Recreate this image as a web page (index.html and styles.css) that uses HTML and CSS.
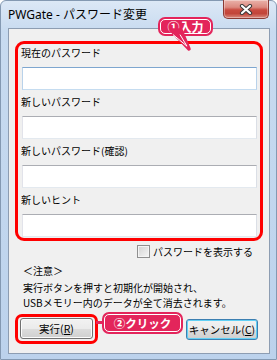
FILE: index.html
```html
<!DOCTYPE html>
<html lang="ja">
<head>
<meta charset="utf-8">
<title>PWGate - パスワード変更</title>
<link rel="stylesheet" href="styles.css">
</head>
<body>
<div class="window">
  <div class="titlebar">
    <span class="title">PWGate - パスワード変更</span>
    <div class="close">
      <svg width="14" height="11" viewBox="0 0 14 11">
        <path d="M3 2 L11 9 M11 2 L3 9" stroke="#3a3a3a" stroke-width="4.2" stroke-linecap="round"/>
        <path d="M3 2 L11 9 M11 2 L3 9" stroke="#ffffff" stroke-width="2.2" stroke-linecap="round"/>
      </svg>
    </div>
  </div>
  <div class="client">
    <div class="fields">
      <div class="field">
        <div class="label">現在のパスワード</div>
        <div class="input focus"></div>
      </div>
      <div class="field">
        <div class="label">新しいパスワード</div>
        <div class="input"></div>
      </div>
      <div class="field">
        <div class="label">新しいパスワード(確認)</div>
        <div class="input"></div>
      </div>
      <div class="field">
        <div class="label">新しいヒント</div>
        <div class="input"></div>
      </div>
    </div>
    <div class="show">
      <span class="cb"></span>
      <span>パスワードを表示する</span>
    </div>
    <div class="note">
      <p class="note-head">＜注意＞</p>
      <p class="note-body">実行ボタンを押すと初期化が開始され、<br>USBメモリー内のデータが全て消去されます。</p>
    </div>
    <div class="buttons">
      <div class="hl">
        <div class="btn">実行(<u>R</u>)</div>
      </div>
      <div class="btn default">キャンセル(<u>C</u>)</div>
    </div>
  </div>
</div>

<div class="callout c1">①入力</div>
<svg class="tail" width="28" height="26" viewBox="0 0 28 26">
  <polygon points="5,3 15,3 23,22" fill="#e3255b" stroke="#e3255b" stroke-width="3.5" stroke-linejoin="round"/>
  <polyline points="7,7.6 21,19.2 14,7.6" fill="none" stroke="#ffffff" stroke-width="1" stroke-linejoin="round"/>
</svg>
<div class="connector"></div>
<div class="callout c2">②クリック</div>
</body>
</html>
```
FILE: styles.css
```css
* { box-sizing: border-box; }
html, body { margin: 0; padding: 0; background: #ffffff; }
body {
  position: relative;
  width: 277px;
  height: 360px;
  font-family: "Noto Sans CJK JP", "Noto Sans", sans-serif;
  font-size: 10px;
  color: #000;
}
.window {
  width: 277px;
  height: 360px;
  border: 1px solid #8499b2;
  border-radius: 6px 6px 0 0;
  background: linear-gradient(#dce8f6 0, #c8dbf0 30px, #bcd2ec 100%);
  display: flex;
  flex-direction: column;
}
.titlebar {
  height: 27px;
  display: flex;
  align-items: flex-start;
  padding-left: 7px;
}
.title {
  margin-top: 5px;
  font-family: "Noto Sans", "Noto Sans CJK JP", sans-serif;
  font-size: 12px;
  line-height: 17px;
  color: #000;
}
.close {
  margin-left: auto;
  margin-right: 7px;
  margin-top: -1px;
  width: 46px;
  height: 19px;
  border: 1px solid #8a3a34;
  border-top: none;
  border-radius: 0 0 5px 5px;
  background: linear-gradient(#eab2aa 0, #dc8a80 40%, #c94b40 55%, #c2453a 75%, #d98a7e 100%);
  box-shadow: inset 0 0 0 1px rgba(255,255,255,0.35);
  display: flex;
  align-items: center;
  justify-content: center;
}
.client {
  flex: 1;
  margin: 0 6px 5px 7px;
  border: 1px solid #8d9db2;
  background: #f0f0f0;
  display: flex;
  flex-direction: column;
}
.fields {
  margin: 12px 6px 0 6px;
  border: 3px solid #ff0000;
  border-radius: 9px;
  padding: 0 3px 1px 4px;
}
.label {
  height: 23px;
  line-height: 17px;
  margin-left: -2px;
  padding-left: 1px;
  padding-bottom: 6px;
  white-space: nowrap;
}
.input {
  height: 23px;
  background: #fff;
  border: 1px solid;
  border-color: #abadb3 #dbdfe6 #e3e9ef #e2e3ea;
  margin-bottom: 3px;
}
.input.focus {
  border-color: #7ea6cf #b9d2ea #c5dcf0 #b9d2ea;
}
.field:last-child .input { margin-bottom: 0; }
.show {
  margin-top: 4px;
  padding-left: 128px;
  display: flex;
  align-items: center;
  height: 13px;
  line-height: 13px;
  white-space: nowrap;
}
.cb {
  width: 13px;
  height: 13px;
  border: 1px solid #8f8f8f;
  background: linear-gradient(135deg, #d2d2d2, #f6f6f6);
  box-shadow: inset 0 0 0 1px #f4f4f4;
  margin-right: 3px;
  flex: none;
}
.note {
  margin-top: 5px;
  padding-left: 14px;
}
.note p { margin: 0; line-height: 15px; white-space: nowrap; }
.note-body { margin-top: 2px !important; }
.buttons {
  margin-top: 4px;
  padding: 0 11px 0 6px;
  display: flex;
  align-items: center;
  justify-content: space-between;
}
.hl {
  width: 83px;
  height: 30px;
  border: 3px solid #ff0000;
  border-radius: 7px;
  padding: 1px 2px 2px 2px;
}
.btn {
  width: 73px;
  height: 21px;
  border: 1px solid #707070;
  border-radius: 3px;
  background: linear-gradient(#f2f2f2 0, #ebebeb 50%, #dddddd 50%, #cfcfcf 100%);
  box-shadow: inset 0 0 0 1px #fcfcfc;
  display: flex;
  align-items: center;
  justify-content: center;
  line-height: 19px;
  font-size: 10.5px;
  white-space: nowrap;
}
.btn.default {
  width: 72px;
  border-color: #3c7fb1;
  box-shadow: inset 0 0 0 1px #62d0f5;
  margin-top: 1px;
}
.btn u { text-decoration: underline; text-underline-offset: 1px; }
.callout {
  position: absolute;
  background: #e3255b;
  border: 1px solid #ffffff;
  box-shadow: 0 0 0 2px #e3255b;
  border-radius: 5px;
  color: #ffffff;
  font-weight: bold;
  display: flex;
  align-items: center;
  justify-content: center;
  white-space: nowrap;
  z-index: 2;
}
.c1 {
  left: 160px;
  top: 19px;
  width: 51px;
  height: 15px;
  font-size: 12px;
}
.c2 {
  left: 104px;
  top: 314px;
  width: 77px;
  height: 18px;
  font-size: 11.5px;
}
.tail {
  position: absolute;
  left: 166px;
  top: 27px;
  z-index: 3;
}
.connector {
  position: absolute;
  left: 96px;
  top: 321px;
  width: 8px;
  height: 3px;
  background: #e3255b;
  z-index: 1;
}
```
